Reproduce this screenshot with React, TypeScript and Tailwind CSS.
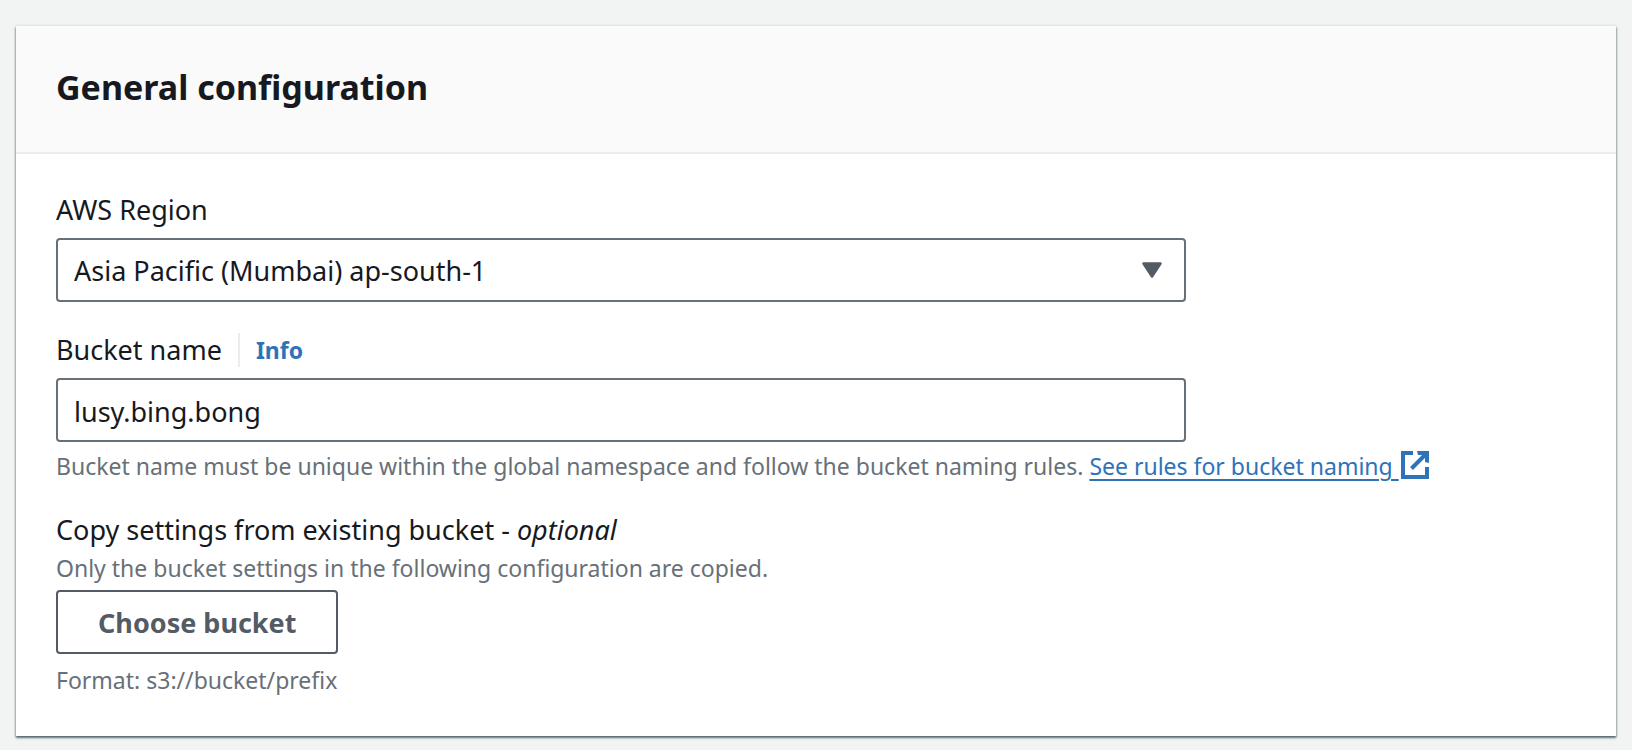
import { useState } from "react";

function ExternalIcon() {
  return (
    <svg viewBox="0 0 28 28" className="ml-0.5 inline-block size-7 align-[-4px]" fill="none" stroke="currentColor" strokeWidth="4" aria-hidden="true">
      <path d="M12 2H2v24h24V16" />
      <path d="M25 3 10.500 17.500" />
      <path d="M16 0h12v12l-4-1V7l-3-3h-4z" fill="currentColor" stroke="none" />
    </svg>
  );
}

const label = "block text-[27px] leading-[44px] text-[#16191f]";
const hint = "text-[23px] leading-8 text-[#687078]";
const control = "h-16 w-full rounded-sm border-2 border-[#687078] bg-white px-4 pt-0.5 text-[27px] text-[#16191f]";

export default function App() {
  const [name, setName] = useState("lusy.bing.bong");
  return (
    <main className="min-h-screen bg-[#f2f3f3] px-4 pt-[26px] pb-3.5 font-['Noto_Sans',sans-serif]">
      <section className="bg-white shadow-[0_2px_2px_0_rgba(0,28,36,0.5),1px_1px_2px_0_rgba(0,28,36,0.2),-1px_1px_2px_0_rgba(0,28,36,0.2),0_-2px_0_0_#eaeded]">
        <header className="border-b-2 border-[#eaeded] bg-[#fafafa] px-10 pt-[38px] pb-[42px]">
          <h2 className="text-[34px] leading-[46px] font-bold text-[#16191f]">General configuration</h2>
        </header>

        <form className="flex flex-col gap-[26px] px-10 pt-[34px] pb-10" onSubmit={(e) => e.preventDefault()}>
          <div>
            <label htmlFor="region" className={label}>AWS Region</label>
            <div className="mt-1.5 grid grid-cols-4 gap-10">
              <div className="relative col-span-3">
                <select id="region" className={`${control} appearance-none`}>
                  <option>Asia Pacific (Mumbai) ap-south-1</option>
                </select>
                <svg viewBox="0 0 20 16" className="pointer-events-none absolute top-6 right-6 h-4 w-5 text-[#545b64]" aria-hidden="true">
                  <path d="M1.500 1.500h17L10 14.500z" fill="currentColor" stroke="currentColor" strokeWidth="2.500" strokeLinejoin="round" />
                </svg>
              </div>
            </div>
          </div>

          <div>
            <div className="flex items-center">
              <label htmlFor="bucket" className={label}>Bucket name</label>
              <a href="#info" className="ml-4 border-l-2 border-[#eaeded] pl-4 text-[23px] leading-[34px] font-bold text-[#2e73b8]">Info</a>
            </div>
            <div className="mt-1.5 grid grid-cols-4 gap-10">
              <input id="bucket" type="text" value={name} onChange={(e) => setName(e.target.value)} className={`${control} col-span-3`} />
            </div>
            <p className={`${hint} mt-2`}>
              Bucket name must be unique within the global namespace and follow the bucket naming rules.{" "}
              <a href="#rules" className="text-[#2e73b8] underline decoration-2 underline-offset-4">
                See rules for bucket naming <ExternalIcon />
              </a>
            </p>
          </div>

          <div>
            <h3 className={label}>
              Copy settings from existing bucket - <em>optional</em>
            </h3>
            <p className={hint}>Only the bucket settings in the following configuration are copied.</p>
            <button type="button" className="mt-1.5 block h-16 rounded-sm border-2 border-[#545b64] bg-white px-10 pt-0.5 text-[27px] font-bold text-[#545b64]">
              Choose bucket
            </button>
            <p className={`${hint} mt-2.5`}>Format: s3://bucket/prefix</p>
          </div>
        </form>
      </section>
    </main>
  );
}
